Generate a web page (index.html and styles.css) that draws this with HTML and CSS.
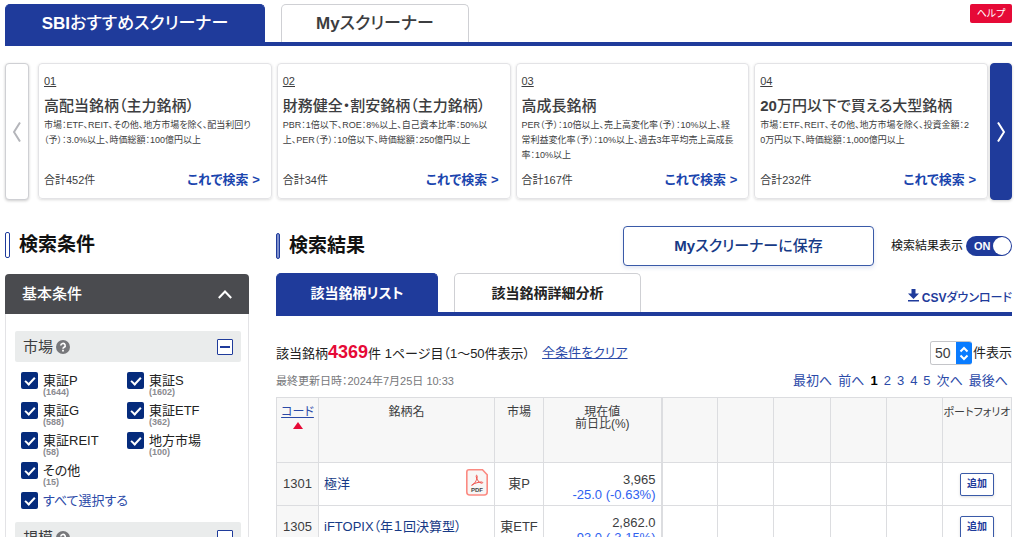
FILE: index.html
```html
<!DOCTYPE html>
<html lang="ja">
<head>
<meta charset="utf-8">
<title>スクリーナー</title>
<link rel="stylesheet" href="styles.css">
</head>
<body>
<header class="top">
  <nav class="tabs">
    <a class="tab tab-on tab-rec" href="#rec"><b>SBI</b>おすすめスクリーナー</a>
    <a class="tab tab-my" href="#my"><b>My</b>スクリーナー</a>
  </nav>
  <button class="help-btn" type="button">ヘルプ</button>
</header>

<section class="carousel">
  <button class="arrow prev" type="button" aria-label="前へ"><svg width="8" height="20" viewBox="0 0 8 20"><path d="M7 .5 1 10l6 9.500"/></svg></button>
  <div class="cards">
    <article class="card"><span class="num">01</span><h3>高配当銘柄（主力銘柄）</h3><p>市場：ETF、REIT、その他、地方市場を除く、配当利回り<br>（予）：3.0%以上、時価総額：100億円以上</p><footer><span>合計452件</span><a href="#s1">これで検索 &gt;</a></footer></article>
    <article class="card"><span class="num">02</span><h3>財務健全・割安銘柄（主力銘柄）</h3><p>PBR：1倍以下、ROE：8%以上、自己資本比率：50%以<br>上、PER（予）：10倍以下、時価総額：250億円以上</p><footer><span>合計34件</span><a href="#s2">これで検索 &gt;</a></footer></article>
    <article class="card"><span class="num">03</span><h3>高成長銘柄</h3><p>PER（予）：10倍以上、売上高変化率（予）：10%以上、経<br>常利益変化率（予）：10%以上、過去3年平均売上高成長<br>率：10%以上</p><footer><span>合計167件</span><a href="#s3">これで検索 &gt;</a></footer></article>
    <article class="card"><span class="num">04</span><h3><b>20</b>万円以下で買える大型銘柄</h3><p>市場：ETF、REIT、その他、地方市場を除く、投資金額：2<br>0万円以下、時価総額：1,000億円以上</p><footer><span>合計232件</span><a href="#s4">これで検索 &gt;</a></footer></article>
  </div>
  <button class="arrow next" type="button" aria-label="次へ"><svg width="8" height="20" viewBox="0 0 8 20"><path d="M1 .5 7 10l-6 9.500"/></svg></button>
</section>

<div class="columns">
  <aside class="side">
    <h2 class="heading">検索条件</h2>
    <div class="panel">
      <button class="panel-head" type="button">基本条件<svg width="14" height="9" viewBox="0 0 14 9"><path d="M.8 8 7 1.500 13.200 8"/></svg></button>
      <div class="panel-body">
        <div class="group-head"><span>市場</span><svg class="q" width="14" height="14" viewBox="0 0 14 14"><circle cx="7" cy="7" r="7" fill="#77787b"/><path d="M4.800 5.500a2.200 2.100 0 1 1 3.300 1.800c-.8.5-1.100.8-1.100 1.500" fill="none" stroke="#fff" stroke-width="1.6"/><path d="M6.100 9.700h1.800v1.700H6.100z" fill="#fff"/></svg><button class="minus" type="button" aria-label="閉じる"></button></div>
        <div class="checks">
          <label class="check"><input type="checkbox" checked><span>東証P<small>(1644)</small></span></label>
          <label class="check"><input type="checkbox" checked><span>東証S<small>(1602)</small></span></label>
          <label class="check"><input type="checkbox" checked><span>東証G<small>(588)</small></span></label>
          <label class="check"><input type="checkbox" checked><span>東証ETF<small>(362)</small></span></label>
          <label class="check"><input type="checkbox" checked><span>東証REIT<small>(58)</small></span></label>
          <label class="check"><input type="checkbox" checked><span>地方市場<small>(100)</small></span></label>
          <label class="check"><input type="checkbox" checked><span>その他<small>(15)</small></span></label>
          <label class="check all"><input type="checkbox" checked><span>すべて選択する</span></label>
        </div>
        <div class="group-head"><span>規模</span><svg class="q" width="14" height="14" viewBox="0 0 14 14"><circle cx="7" cy="7" r="7" fill="#77787b"/><path d="M4.800 5.500a2.200 2.100 0 1 1 3.300 1.800c-.8.5-1.100.8-1.100 1.500" fill="none" stroke="#fff" stroke-width="1.6"/><path d="M6.100 9.700h1.800v1.700H6.100z" fill="#fff"/></svg><button class="minus" type="button" aria-label="閉じる"></button></div>
      </div>
    </div>
  </aside>

  <main class="main">
    <div class="main-top">
      <h2 class="heading filled">検索結果</h2>
      <button class="save" type="button"><b>My</b>スクリーナーに保存</button>
      <label class="toggle">検索結果表示<input type="checkbox" role="switch" checked><span class="switch">ON</span></label>
    </div>
    <div class="result-bar">
      <nav class="tabs">
        <a class="tab tab-on tab-list" href="#list">該当銘柄リスト</a>
        <a class="tab tab-detail" href="#detail">該当銘柄詳細分析</a>
      </nav>
      <a class="csv" href="#csv"><svg width="11" height="13" viewBox="0 0 11 13"><path d="M3.500 0h4v4.500H11L5.500 10 0 4.500h3.500zM0 11h11v1.500H0z" fill="#1f3b9b"/></svg><span><b>CSV</b>ダウンロード</span></a>
    </div>
    <div class="status">
      <p class="count">該当銘柄<strong>4369</strong>件 1ページ目（1～50件表示）</p>
      <a class="clear" href="#clear">全条件をクリア</a>
      <label class="per"><span class="sel"><select><option>50</option></select><svg width="16" height="24" viewBox="0 0 16 24"><path d="M4.500 9.500 8 6l3.500 3.500M4.500 13.500 8 17l3.500-3.500"/></svg></span>件表示</label>
    </div>
    <div class="meta">
      <span class="date">最終更新日時：2024年7月25日 10:33</span>
      <nav class="pager"><a href="#f">最初へ</a><a href="#p">前へ</a><b>1</b><a href="#2">2</a><a href="#3">3</a><a href="#4">4</a><a href="#5">5</a><a href="#n">次へ</a><a href="#l">最後へ</a></nav>
    </div>
    <table class="stocks">
      <colgroup><col class="c-code"><col class="c-name"><col class="c-market"><col class="c-price"><col class="c-blank"><col class="c-blank"><col class="c-blank"><col class="c-blank"><col class="c-blank"><col class="c-port"></colgroup>
      <thead><tr><th><a href="#code">コード</a><span class="up"></span></th><th>銘柄名</th><th>市場</th><th class="thick">現在値<br>前日比(%)</th><th></th><th></th><th></th><th></th><th></th><th class="port">ポートフォリオ</th></tr></thead>
      <tbody>
        <tr><td class="code">1301</td><td class="name"><div><a href="#1301">極洋</a><svg width="22" height="27" viewBox="0 0 22 27"><path d="M3 .8h13.500l4.700 5V23a3 3 0 0 1-3 3H3.800a3 3 0 0 1-3-3V3A2.200 2.200 0 0 1 3 .8z" fill="#f8f6f5" stroke="#fb8a82" stroke-width="1.600"/><path d="M6 16.200c2.200-.8 5.200-5.200 5.200-8.700 0-1.800-1.200-1.500-1 0 .3 3 2.800 6.300 5.300 6.700 1.800.2 1.500-1.300-.2-1.200-2.800.1-6.500 1.200-8.600 2.400-1.200.7-1.300 1.100-.7.8z" fill="none" stroke="#f0504a"/><text x="11" y="23" text-anchor="middle" class="pdf-text">PDF</text></svg></div></td><td class="market">東P</td><td class="price thick">3,965<span>-25.0 (-0.63%)</span></td><td></td><td></td><td></td><td></td><td></td><td class="action"><button type="button">追加</button></td></tr>
        <tr><td class="code">1305</td><td class="name"><div><a href="#1305">iFTOPIX（年１回決算型）</a></div></td><td class="market">東ETF</td><td class="price thick">2,862.0<span>-93.0 (-3.15%)</span></td><td></td><td></td><td></td><td></td><td></td><td class="action"><button type="button">追加</button></td></tr>
      </tbody>
    </table>
  </main>
</div>
</body>
</html>
```
FILE: styles.css
```css
* { box-sizing: border-box; }
html { overflow: hidden; background: #fff; }
body {
  margin: 0;
  padding: 4px 12px 0 5px;
  height: 100vh;
  overflow: hidden;
  font-family: "Liberation Sans", "Noto Sans CJK JP", sans-serif;
  font-feature-settings: "palt";
  font-size: 13px;
  line-height: 16px;
  color: #3c3d40;
}
h2, h3, p { margin: 0; }
a { color: #2b4aa8; text-decoration: none; }
button, select, input { font: inherit; font-feature-settings: inherit; margin: 0; }
button { cursor: pointer; padding: 0; }
.pdf-text { font: bold 6px "Liberation Sans", sans-serif; fill: #444; }

.top { display: flex; justify-content: space-between; align-items: flex-start; border-bottom: 4px solid #1f3b9b; }
.tabs { display: flex; gap: 16px; }
.tab {
  display: flex;
  align-items: center;
  justify-content: center;
  height: 38px;
  border: 1px solid #cfd0d4;
  border-bottom: 0;
  border-radius: 5px 5px 0 0;
  color: #3c3d40;
}
.tab-on { background: #1f3b9b; border-color: #1f3b9b; color: #fff; }
.tab-rec, .tab-my { font-size: 17px; font-weight: 500; line-height: 24px; }
.tab-rec { width: 260px; }
.tab-my { width: 188px; }
.help-btn { width: 42px; height: 19px; border: 0; border-radius: 2px; background: #e60a37; color: #fff; font-size: 10px; line-height: 16px; }

.carousel { display: flex; margin-top: 17px; height: 137px; }
.arrow { flex: none; width: 24px; border: 1px solid #cfd0d4; border-radius: 4px; background: #fff; box-shadow: 0 1px 3px #0003; }
.arrow svg { display: block; margin: 0 auto; fill: none; stroke: #b4b5ba; stroke-width: 2; }
.next { width: 22px; background: #1f3b9b; border-color: #1f3b9b; }
.next svg { stroke: #fff; }
.cards { flex: 1; display: grid; grid-template-columns: repeat(4, 1fr); gap: 5px; margin: 0 2px 0 9px; min-width: 0; }
.card {
  display: flex;
  flex-direction: column;
  min-width: 0;
  height: 136px;
  padding: 9px 5px 10px;
  border: 1px solid #e3e3e6;
  border-radius: 4px;
  box-shadow: 0 1px 3px #0002;
}
.num { font-size: 11px; text-decoration: underline; }
.card h3 { margin-top: 7px; font-size: 15px; line-height: 20px; font-weight: 500; white-space: nowrap; }
.card p { margin-top: 2px; font-size: 9px; line-height: 15px; white-space: nowrap; }
.card footer { display: flex; justify-content: space-between; align-items: center; margin-top: auto; padding-right: 6px; font-size: 11px; }
.card footer a { font-size: 13px; font-weight: bold; color: #1a45ae; }

.columns { display: flex; gap: 27px; margin-top: 26px; }
.side { flex: none; width: 244px; padding-top: 6px; }
.heading { display: flex; align-items: center; gap: 9px; height: 26px; font-size: 19px; color: #111; white-space: nowrap; }
.heading::before { content: ""; flex: none; box-sizing: border-box; width: 5px; height: 26px; border: 1px solid #1f3b9b; border-radius: 2px; }
.filled::before { width: 4px; background: #7e8fcb; }
.panel { margin-top: 16px; }
.panel-head {
  display: flex;
  justify-content: space-between;
  align-items: center;
  width: 100%;
  height: 40px;
  padding: 0 17px;
  border: 0;
  border-radius: 4px 4px 0 0;
  background: #4a4b4f;
  color: #fff;
  font-size: 15px;
  font-weight: 500;
}
.panel-head svg { fill: none; stroke: #fff; stroke-width: 2; }
.panel-body { padding: 17px 7px 0 9px; border: 1px solid #e3e3e6; border-top: 0; }
.group-head { display: flex; align-items: center; height: 31px; padding: 0 8px; border-radius: 2px; background: #eaecec; font-size: 15px; }
.q { margin-left: 3px; }
.minus { display: flex; align-items: center; justify-content: center; width: 16px; height: 16px; margin-left: auto; border: 1px solid #1f3b9b; border-radius: 1px; background: #fff; }
.minus::before { content: ""; width: 10px; height: 2px; background: #1f3b9b; }
.checks { display: grid; grid-template-columns: 106px 1fr; grid-auto-rows: 30px; padding: 10px 0 0 6px; }
.check { display: flex; align-items: flex-start; gap: 5px; font-size: 13px; line-height: 17px; white-space: nowrap; color: #222; }
.check small { display: block; font-size: 9px; line-height: 7px; font-weight: bold; color: #8a8b8f; }
.check input { flex: none; appearance: none; width: 17px; height: 17px; border-radius: 2px; background: #052b7c; display: grid; place-items: center; }
.check input::before { content: ""; box-sizing: border-box; width: 10px; height: 6px; border: solid #fff; border-width: 0 0 2px 2px; rotate: -47deg; translate: 0 -1px; }
.all { grid-column: 1 / -1; color: #2b4aa8; }

.main { flex: 1; min-width: 0; }
.main-top { display: flex; align-items: center; height: 40px; }
.save { width: 251px; height: 40px; margin-left: auto; border: 1px solid #3a5aa8; border-radius: 4px; background: #fff; color: #173a86; font-size: 15px; font-weight: 500; box-shadow: 0 2px 4px #1f3b9b22; }
.toggle { display: flex; align-items: center; gap: 3px; margin-left: 17px; font-size: 12px; color: #111; }
.toggle input { position: absolute; opacity: 0; }
.switch { display: flex; align-items: center; justify-content: space-between; width: 46px; height: 20px; padding: 0 1px 0 8px; border-radius: 10px; background: #1f3b9b; color: #fff; font-size: 11px; font-weight: bold; }
.switch::after { content: ""; width: 18px; height: 18px; border-radius: 50%; background: #fff; }
.result-bar { display: flex; justify-content: space-between; align-items: flex-end; margin-top: 7px; border-bottom: 4px solid #1f3b9b; }
.tab-list, .tab-detail { height: 39px; font-size: 14px; font-weight: bold; color: #222; }
.tab-list { width: 162px; color: #fff; }
.tab-detail { width: 187px; }
.csv { display: flex; align-items: center; gap: 3px; margin-bottom: 6px; font-size: 12px; font-weight: 500; color: #1f3b9b; }
.csv svg { margin-bottom: 4px; }
.status { display: flex; align-items: center; height: 24px; margin-top: 25px; font-size: 13px; white-space: nowrap; color: #222; }
.count strong { font-size: 18px; color: #e60a37; }
.clear { margin-left: 12px; text-decoration: underline; }
.per { display: flex; align-items: center; gap: 1px; margin-left: auto; }
.sel { display: flex; height: 24px; border: 1px solid #c4c5c9; border-right: 0; border-radius: 3px; overflow: hidden; }
.sel select { appearance: none; width: 25px; padding: 0 0 0 4px; border: 0; background: #fff; color: #3c3d40; font-size: 14px; }
.sel svg { background: #0a7cff; fill: none; stroke: #fff; stroke-width: 2; }
.meta { display: flex; justify-content: space-between; align-items: center; margin-top: 8px; height: 16px; padding-right: 4px; white-space: nowrap; }
.date { font-size: 11px; color: #77787b; }
.pager { display: flex; gap: 6px; font-size: 13px; }
.pager b { color: #000; }

.stocks { width: 100%; margin-top: 8px; border-collapse: collapse; table-layout: fixed; }
.c-code { width: 42px; }
.c-name { width: 176px; }
.c-market { width: 49px; }
.c-price { width: 118px; }
.c-port { width: 69px; }
.stocks th, .stocks td { padding: 0; border: 1px solid #dcdde0; }
.stocks th { height: 65px; padding-top: 8px; background: #f7f7f7; vertical-align: top; font-size: 12px; line-height: 12px; font-weight: normal; white-space: nowrap; }
.stocks th a { text-decoration: underline; }
.stocks .port { font-size: 11px; }
.stocks .thick { border-right: 2px solid #dcdde0; }
.up { display: block; width: 0; margin: 4px auto 0; border: 5px solid transparent; border-top: 0; border-bottom: 7px solid #e60a37; }
.stocks td { height: 43px; }
.stocks .code { background: #f7f7f7; text-align: center; }
.name div { display: flex; align-items: center; justify-content: space-between; padding: 0 6px 0 5px; white-space: nowrap; }
.name svg { margin-top: -3px; }
.name a { color: #173a86; }
.market { text-align: center; }
.stocks .price { padding: 5px 5px 0 0; text-align: right; line-height: 15px; }
.price span { display: block; color: #2f62f0; }
.action { text-align: center; }
.action button { width: 34px; height: 23px; border: 1px solid #3a5aa8; border-radius: 2px; background: #fff; color: #1f3b9b; font-size: 10px; font-weight: bold; box-shadow: 0 1px 3px #0002; }
```
